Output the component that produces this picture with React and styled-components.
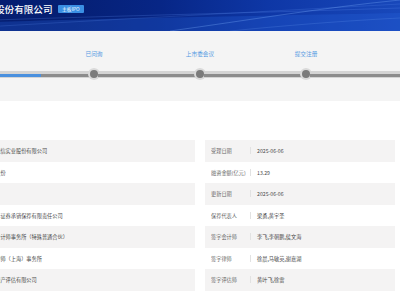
import React from "react";
import styled, { createGlobalStyle } from "styled-components";

const GlobalStyle = createGlobalStyle`
  html, body {
    margin: 0;
    padding: 0;
    overflow: hidden;
    background: #fff;
  }
  body {
    font-family: "Noto Sans CJK SC", "Noto Sans", sans-serif;
  }
`;

const steps = [
  { name: "已受理", done: true },
  { name: "已问询" },
  { name: "上市委会议" },
  { name: "提交注册" },
  { name: "注册生效" },
];

const leftRows = [
  { label: "发行人全称", value: "中诚信实业股份有限公司" },
  { label: "证券类别", value: "Ａ股份" },
  { label: "审核状态", value: "" },
  { label: "保荐机构", value: "国泰证券承销保荐有限责任公司" },
  { label: "会计师事务所", value: "信会计师事务所（特殊普通合伙）" },
  { label: "律师事务所", value: "德律师（上海）事务所" },
  { label: "评估机构", value: "信资产评估有限公司" },
];

const rightRows = [
  { label: "受理日期", value: "2025-06-06" },
  { label: "融资金额(亿元)", value: "13.29" },
  { label: "更新日期", value: "2025-06-06" },
  { label: "保荐代表人", value: "梁勇,黄宇圣" },
  { label: "签字会计师", value: "李飞,李朝鹏,侯文海" },
  { label: "签字律师", value: "徐晨,马敏英,谢嘉湖" },
  { label: "签字评估师", value: "黄叶飞,徐雷" },
];

const Page = styled.div`
  width: 600px;
  margin-left: -200px;
`;

const Banner = styled.header`
  position: relative;
  height: 31px;
  overflow: hidden;
  background: linear-gradient(
    90deg,
    #041a68 0%,
    #051f74 45%,
    #072686 60%,
    #0e37a6 78%,
    #1848bb 100%
  );
`;

const Waves = styled.svg`
  position: absolute;
  inset: 0;
  width: 100%;
  height: 100%;
`;

const TitleRow = styled.div`
  position: relative;
  display: flex;
  align-items: center;
  gap: 5px;
  padding: 3px 0 0 147px;
`;

const Title = styled.h1`
  margin: 0;
  font-size: 9.6px;
  line-height: 12px;
  font-weight: 500;
  color: #fff;
`;

const Badge = styled.span`
  font-size: 4.8px;
  line-height: 8px;
  padding: 0 4.5px;
  background: #3a8fe4;
  color: #fff;
  border-radius: 1px;
`;

const StepBand = styled.section`
  display: flex;
  height: 70px;
  padding: 19px 0 0 135px;
  box-sizing: border-box;
  background: #f4f4f4;
`;

const StepItem = styled.div`
  flex: 0 0 106px;
  display: flex;
  flex-direction: column;
`;

const StepLabel = styled.div`
  height: 18px;
  box-sizing: border-box;
  padding-top: ${(p) => (p.$active ? "6px" : "0")};
  text-align: center;
  font-size: ${(p) => (p.$active ? "7px" : "5.7px")};
  line-height: 7px;
  color: #549ae2;
`;

const Track = styled.div`
  display: flex;
  align-items: center;
  height: 12px;
`;

const Segment = styled.div`
  flex: 1;
  height: 7px;
  background: linear-gradient(
    #d4d4d4 0 3px,
    ${(p) => (p.$done ? "#4a90de" : "#8c8c8c")} 3px 6px,
    #d4d4d4 6px 7px
  );
`;

const Dot = styled.span`
  flex: 0 0 8.5px;
  height: 8.5px;
  border-radius: 50%;
  background: ${(p) => (p.$done ? "#4a90de" : "#7b7b7b")};
  box-shadow: 0 0 0 2px #dadada;
`;

const Info = styled.section`
  display: grid;
  grid-template-columns: 257px 190px;
  column-gap: 10px;
  padding: 39px 0 0 138px;
`;

const Card = styled.div`
  display: flex;
  flex-direction: column;
`;

const Row = styled.div`
  display: flex;
  align-items: center;
  height: 21.5px;
  padding-left: 6px;
  background: ${(p) => (p.$striped ? "#f4f3f3" : "#fff")};
`;

const Label = styled.span`
  flex: 0 0 39px;
  font-size: 5.2px;
  color: #666;
  white-space: nowrap;
  overflow: hidden;
`;

const Divider = styled.i`
  flex: 0 0 1px;
  height: 7px;
  margin-right: 6px;
  background: #e2e2e2;
`;

const Value = styled.span`
  font-size: 5.2px;
  color: #4a4a4a;
  white-space: nowrap;
`;

function InfoCard({ rows }) {
  return (
    <Card>
      {rows.map((r, i) => (
        <Row key={r.label} $striped={i % 2 === 0}>
          <Label>{r.label}</Label>
          <Divider />
          <Value>{r.value}</Value>
        </Row>
      ))}
    </Card>
  );
}

export default function App() {
  return (
    <>
      <GlobalStyle />
      <Page>
        <Banner>
          <Waves viewBox="0 0 600 31" preserveAspectRatio="none">
            <path d="M0 31 C150 21 300 19 600 13 L600 31 Z" fill="rgba(40,100,220,0.3)" />
            <path d="M0 29 C180 18 360 16 600 8" stroke="rgba(110,160,255,0.35)" strokeWidth="0.6" fill="none" />
            <path d="M120 31 C260 22 420 14 600 4" stroke="rgba(110,160,255,0.3)" strokeWidth="0.6" fill="none" />
            <path d="M370 31 C450 20 520 8 600 0" stroke="rgba(130,180,255,0.4)" strokeWidth="0.8" fill="none" />
            <path d="M430 31 C500 24 560 20 600 18" stroke="rgba(130,180,255,0.3)" strokeWidth="0.6" fill="none" />
          </Waves>
          <TitleRow>
            <Title>中诚信实业股份有限公司</Title>
            <Badge>主板IPO</Badge>
          </TitleRow>
        </Banner>
        <StepBand>
          {steps.map((s) => (
            <StepItem key={s.name}>
              <StepLabel $active={s.done}>{s.name}</StepLabel>
              <Track>
                <Segment $done={s.done} />
                <Dot $done={s.done} />
                <Segment $done={s.done} />
              </Track>
            </StepItem>
          ))}
        </StepBand>
        <Info>
          <InfoCard rows={leftRows} />
          <InfoCard rows={rightRows} />
        </Info>
      </Page>
    </>
  );
}
